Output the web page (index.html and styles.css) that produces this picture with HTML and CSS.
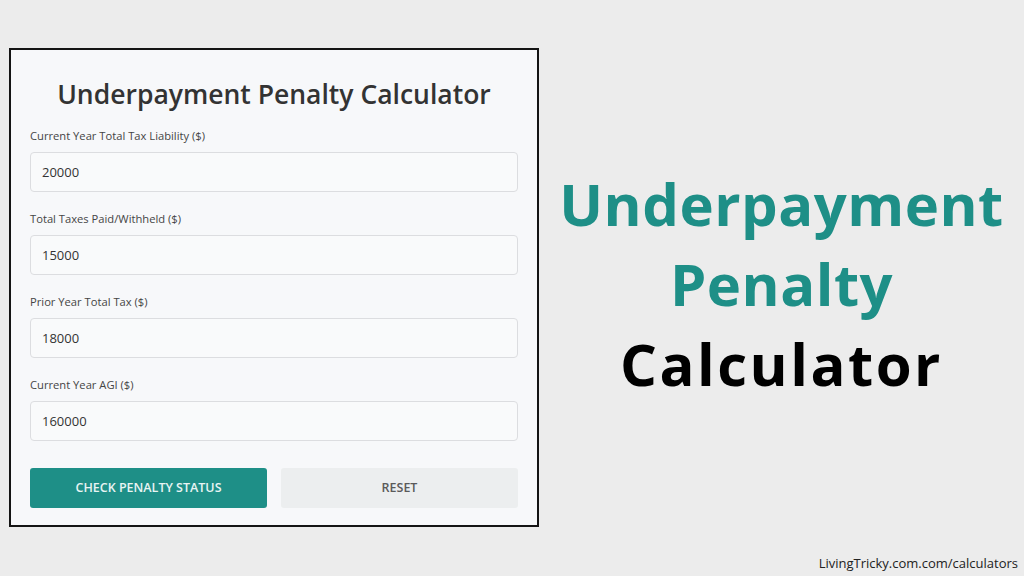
FILE: index.html
```html
<!DOCTYPE html>
<html>
<head>
<meta charset="utf-8">
<link rel="stylesheet" href="styles.css">
</head>
<body>
<div class="page">
  <div class="left">
    <div class="card">
      <h1 class="title">Underpayment Penalty Calculator</h1>
      <div class="field">
        <label class="label">Current Year Total Tax Liability ($)</label>
        <div class="input">20000</div>
      </div>
      <div class="field">
        <label class="label">Total Taxes Paid/Withheld ($)</label>
        <div class="input">15000</div>
      </div>
      <div class="field">
        <label class="label">Prior Year Total Tax ($)</label>
        <div class="input">18000</div>
      </div>
      <div class="field">
        <label class="label">Current Year AGI ($)</label>
        <div class="input">160000</div>
      </div>
      <div class="buttons">
        <div class="btn btn-primary">CHECK PENALTY STATUS</div>
        <div class="btn btn-reset">RESET</div>
      </div>
    </div>
  </div>
  <div class="right">
    <div class="headline">
      <div class="hl teal">Underpayment</div>
      <div class="hl teal">Penalty</div>
      <div class="hl black wide">Calculator</div>
    </div>
  </div>
  <div class="footer">LivingTricky.com.com/calculators</div>
</div>
</body>
</html>
```
FILE: styles.css
```css
* { box-sizing: border-box; }
html, body { margin: 0; padding: 0; }
body {
  width: 1024px;
  height: 576px;
  background: #ececec;
  font-family: "Open Sans", "Noto Sans", sans-serif;
  overflow: hidden;
}
.page {
  position: relative;
  width: 1024px;
  height: 576px;
  display: flex;
}
.left {
  padding: 48px 0 0 9px;
}
.card {
  width: 530px;
  height: 479px;
  background: #f7f8fa;
  border: 2px solid #141414;
  padding: 0 19px 0 19px;
}
.title {
  margin: 26px 0 16px 0;
  text-align: center;
  font-size: 26.5px;
  font-weight: 600;
  color: #333;
  line-height: 36px;
}
.field {
  margin-bottom: 19px;
}
.label {
  display: block;
  font-size: 11.2px;
  color: #454545;
  line-height: 16px;
  margin-bottom: 8px;
}
.input {
  height: 40px;
  border: 1px solid #dcdde0;
  border-radius: 4px;
  background: #f9fafb;
  font-size: 13px;
  color: #333;
  line-height: 38px;
  padding-left: 11px;
}
.buttons {
  display: flex;
  gap: 14px;
  margin-top: 27px;
}
.btn {
  flex: 1;
  height: 40px;
  border-radius: 3px;
  text-align: center;
  line-height: 40px;
  font-size: 12.5px;
  font-weight: 600;
}
.btn-primary {
  background: #1e8f87;
  color: #e8f4f3;
}
.btn-reset {
  background: #eceeef;
  color: #5a5a5a;
}
.right {
  flex: 1;
  display: flex;
  justify-content: center;
  padding-top: 164px;
}
.headline {
  text-align: center;
}
.hl {
  font-family: "Open Sans", sans-serif;
  font-weight: 700;
  font-size: 58px;
  line-height: 80px;
  letter-spacing: 0.5px;
}
.wide { letter-spacing: 2.5px; }
.teal { color: #1e8f87; }
.black { color: #000; }
.footer {
  position: absolute;
  right: 6px;
  bottom: 4px;
  font-size: 13px;
  color: #222;
}
```
